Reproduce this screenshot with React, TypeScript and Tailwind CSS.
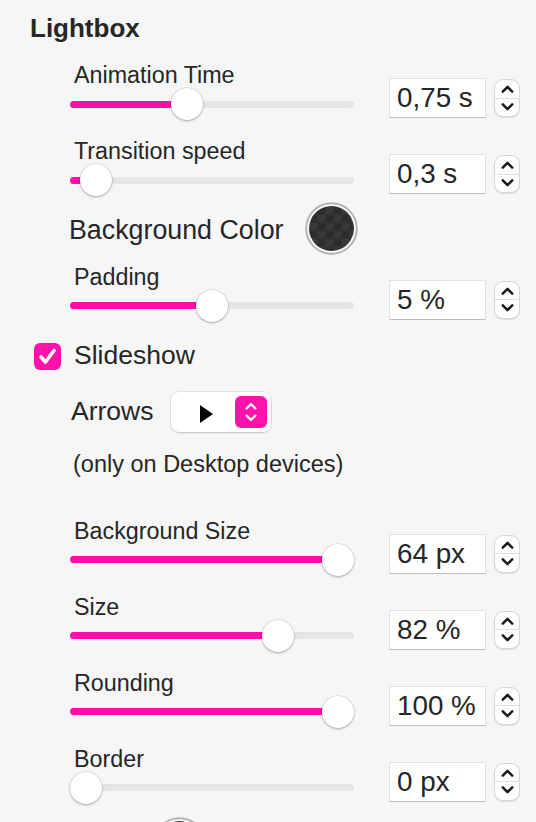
import React from 'react';

interface SliderRowProps {
  label: string;
  value: number;
  text: string;
  className?: string;
}

/**
 * Slider - track 284px, thumb 32px
 */
function Slider({ value }: { value: number }) {
  const travel = 252;
  return (
    <div className="relative h-[32px] w-[284px]">
      <div className="absolute left-0 right-0 top-[12.5px] h-[7px] rounded-full bg-[#e5e5e5]" />
      <div
        className="absolute left-0 top-[12.5px] h-[7px] rounded-full bg-[#ff0fa8]"
        style={{ width: 16 + value * travel }}
      />
      <div
        className="absolute top-0 h-[32px] w-[32px] rounded-full bg-white shadow-[0_0_0_0.5px_rgba(0,0,0,0.12),0_1px_2.5px_rgba(0,0,0,0.28)]"
        style={{ left: value * travel }}
      />
    </div>
  );
}

function Chevron({ up, color = '#1a1a1a', width = 13 }: { up?: boolean; color?: string; width?: number }) {
  return (
    <svg width={width} height="8" viewBox="0 0 13 8" fill="none">
      <path
        d={up ? 'M1.8 6.6 L6.5 1.8 L11.2 6.6' : 'M1.8 1.4 L6.5 6.2 L11.2 1.4'}
        stroke={color}
        strokeWidth="2.5"
        strokeLinecap="round"
        strokeLinejoin="round"
      />
    </svg>
  );
}

function Stepper() {
  return (
    <div className="flex h-[38px] w-[26px] flex-col rounded-[9px] border border-[#d6d6d6] bg-white shadow-[0_1px_1px_rgba(0,0,0,0.1)]">
      <div className="flex flex-1 items-center justify-center pt-[1px]">
        <Chevron up />
      </div>
      <div className="h-px bg-[#dedede]" />
      <div className="flex flex-1 items-center justify-center pb-[1px]">
        <Chevron />
      </div>
    </div>
  );
}

function SliderRow({ label, value, text, className = '' }: SliderRowProps) {
  return (
    <div className={`ml-[40px] flex ${className}`}>
      <div className="flex w-[284px] flex-col">
        <span className="pl-[4px] text-[23.3px] leading-[26px]">{label}</span>
        <Slider value={value} />
      </div>
      <div className="ml-[35px] mt-[16px] flex items-center gap-[8px] self-start">
        <div className="flex h-[40px] w-[97px] items-center border border-[#e2e2e2] border-b-[#bcbcbc] bg-white pl-[7px] text-[27.8px]">
          {text}
        </div>
        <Stepper />
      </div>
    </div>
  );
}

function ColorWell({ id }: { id: string }) {
  return (
    <svg width="53" height="53" viewBox="0 0 53 53" className="shrink-0">
      <defs>
        <pattern id={id} x="4.5" y="4.5" width="16" height="16" patternUnits="userSpaceOnUse">
          <rect width="16" height="16" fill="#2c2c2c" />
          <rect width="8" height="8" fill="#383838" />
          <rect x="8" y="8" width="8" height="8" fill="#383838" />
        </pattern>
      </defs>
      <circle cx="26.5" cy="26.5" r="25.3" fill="#fbfbfb" stroke="#b3b3b3" strokeWidth="2" />
      <circle cx="26.5" cy="26.5" r="22.5" fill={`url(#${id})`} />
    </svg>
  );
}

export default function App() {
  return (
    <div className="min-h-screen bg-[#f6f6f6] pl-[30px] pt-[13px] font-['Liberation_Sans',Arial,sans-serif] text-[#262626]">
      <h2 className="text-[26px] font-bold leading-[30px]">Lightbox</h2>

      <SliderRow className="mt-[19px]" label="Animation Time" value={0.4} text="0,75 s" />
      <SliderRow className="mt-[18px]" label="Transition speed" value={0.04} text="0,3 s" />

      {/* Background color */}
      <div className="ml-[39px] mt-[6px] flex items-center gap-[21px]">
        <span className="pt-[3px] text-[26.8px]">Background Color</span>
        <ColorWell id="bgwell" />
      </div>

      <SliderRow className="mt-[8.5px]" label="Padding" value={0.5} text="5 %" />

      {/* Slideshow */}
      <div className="ml-[4px] mt-[21px] flex h-[27px] items-center gap-[13px]">
        <div className="flex h-[27px] w-[27px] items-center justify-center rounded-[6px] bg-[#ff12a9]">
          <svg width="27" height="27" viewBox="0 0 27 27" fill="none">
            <path
              d="M7 14 L11.5 19 L20 7.5"
              stroke="white"
              strokeWidth="3.6"
              strokeLinecap="round"
              strokeLinejoin="round"
            />
          </svg>
        </div>
        <span className="text-[26.5px]">Slideshow</span>
      </div>

      <div className="ml-[41px] mt-[22px] flex items-center gap-[18px]">
        <span className="text-[26.5px]">Arrows</span>
        <div className="flex h-[40px] w-[100px] items-center rounded-[8px] bg-white pl-[29px] pr-[4px] shadow-[0_0_0_0.5px_rgba(0,0,0,0.14),0_1px_2px_rgba(0,0,0,0.15)]">
          <svg width="13" height="18" viewBox="0 0 13 18" className="mt-[5px]">
            <polygon points="0,0 13,9 0,18" fill="#000" />
          </svg>
          <div className="ml-auto flex h-[32px] w-[32px] flex-col items-center justify-center gap-[4px] rounded-[6px] bg-[#ff12a9]">
            <Chevron up color="#fff" width={12} />
            <Chevron color="#fff" width={12} />
          </div>
        </div>
      </div>

      <p className="ml-[43px] mt-[19px] text-[23.5px] leading-[26px]">(only on Desktop devices)</p>

      <SliderRow className="mt-[41px]" label="Background Size" value={1} text="64 px" />
      <SliderRow className="mt-[18px]" label="Size" value={0.76} text="82 %" />
      <SliderRow className="mt-[18px]" label="Rounding" value={1} text="100 %" />
      <SliderRow className="mt-[18px]" label="Border" value={0} text="0 px" />

      {/* next colour well, only its top shows */}
      <div className="ml-[123px] mt-[13.5px] pb-[20px]">
        <ColorWell id="borderwell" />
      </div>
    </div>
  );
}
